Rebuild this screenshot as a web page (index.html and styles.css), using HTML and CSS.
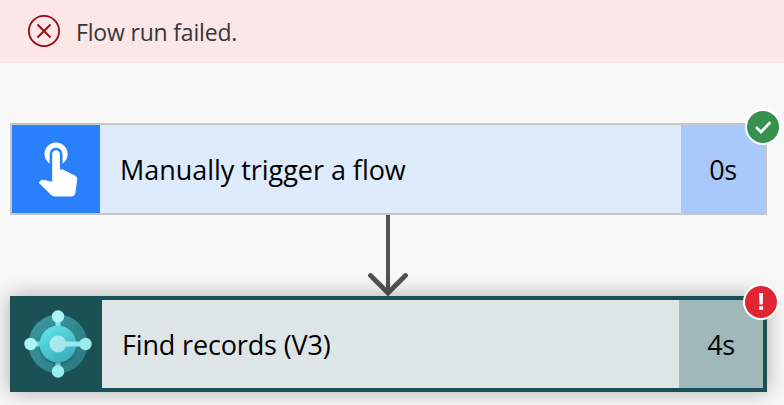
FILE: index.html
```html
<!DOCTYPE html>
<html lang="en">
<head>
<meta charset="utf-8">
<title>Flow run</title>
<link rel="stylesheet" href="styles.css">
</head>
<body>
<header class="banner">
  <svg class="banner-icon" viewBox="0 0 34 34"><circle cx="17" cy="16" r="15.1"/><path d="M10.500 9.500l13 13M23.500 9.500l-13 13"/></svg>
  <span class="banner-text">Flow run failed.</span>
</header>
<main class="flow">
  <section class="card trigger">
    <div class="card-icon">
      <svg class="touch" viewBox="4.5 2.8 15.5 21.4"><path d="M9 11.24V7.5C9 6.12 10.12 5 11.5 5S14 6.12 14 7.5v3.74c1.21-.81 2-2.18 2-3.74C16 5.01 13.99 3 11.5 3S7 5.01 7 7.5c0 1.56.79 2.93 2 3.74zm9.84 4.63l-4.54-2.26c-.17-.07-.35-.11-.54-.11H13v-6c0-.83-.67-1.5-1.5-1.5S10 6.67 10 7.5v10.74l-3.43-.72c-.08-.01-.15-.03-.24-.03-.31 0-.59.13-.79.33l-.79.8 4.94 4.94c.27.27.65.44 1.06.44h6.79c.75 0 1.33-.55 1.44-1.28l.75-5.27c.01-.07.02-.14.02-.2 0-.62-.38-1.16-.91-1.38z"/></svg>
    </div>
    <div class="card-title"><span class="trigger-title">Manually trigger a flow</span></div>
    <div class="card-time">0s</div>
    <svg class="badge" viewBox="0 0 36 36"><circle cx="18" cy="18" r="18" fill="#fff"/><circle cx="18" cy="18" r="16" fill="#35914b"/><path d="M11 18l5 5 9.300-9.800" fill="none" stroke="#fff" stroke-width="2.700"/></svg>
  </section>
  <svg class="arrow" viewBox="0 0 44 81"><path d="M22 0v77" stroke-width="4"/><path d="M4.500 60.500L22 78l17.500-17.500" stroke-width="4.800" stroke-linecap="round"/></svg>
  <section class="card action">
    <div class="card-icon">
      <svg class="hub" viewBox="0 0 68 68">
        <defs>
          <linearGradient id="ring" x1="0" y1="0" x2="1" y2="1"><stop offset="0" stop-color="#3b9aa3"/><stop offset="1" stop-color="#2a767d"/></linearGradient>
          <linearGradient id="disc" x1=".2" y1="0" x2=".8" y2="1"><stop offset="0" stop-color="#5fe3ea"/><stop offset="1" stop-color="#39abb8"/></linearGradient>
          <linearGradient id="core" x1="0" y1="0" x2="1" y2="1"><stop offset="0" stop-color="#a9f0f4"/><stop offset="1" stop-color="#a4e0e6"/></linearGradient>
          <filter id="soft" x="-30%" y="-30%" width="160%" height="160%"><feDropShadow dx="0" dy="2" stdDeviation="1.800" flood-color="#0d4147" flood-opacity=".45"/></filter>
        </defs>
        <circle cx="34" cy="34" r="29.500" fill="url(#ring)"/>
        <path d="M34 7v54M7 34h20" stroke="#8ddfe5" stroke-width="5"/>
        <circle cx="34" cy="34" r="18.300" fill="url(#disc)" filter="url(#soft)"/>
        <path d="M34 34h27" stroke="#97e9ef" stroke-width="5"/>
        <circle cx="34" cy="34" r="8.500" fill="url(#core)"/>
        <circle cx="34" cy="6.500" r="6.200" fill="#aaf4f8"/>
        <circle cx="6.500" cy="34" r="6.200" fill="#aaf4f8"/>
        <circle cx="61.500" cy="34" r="6.200" fill="#9cebef"/>
        <circle cx="34" cy="61.500" r="6.200" fill="#98edf0"/>
      </svg>
    </div>
    <div class="card-title"><span class="action-title">Find records (V3)</span></div>
    <div class="card-time">4s</div>
    <svg class="badge" viewBox="0 0 36 36"><circle cx="18" cy="18" r="18" fill="#fff"/><circle cx="18" cy="18" r="16" fill="#de2531"/><path d="M16.100 9h4l-.4 11.500h-3.200zM16.100 22.300h4v3.500h-4z" fill="#fff"/></svg>
  </section>
</main>
</body>
</html>
```
FILE: styles.css
```css
* { box-sizing: border-box; }
body {
  margin: 0;
  height: 405px;
  overflow: hidden;
  background: #f8f8f8;
  color: #000;
  font-family: "Open Sans", "Noto Sans", sans-serif;
}
svg { display: block; flex: none; }
.banner {
  display: flex;
  align-items: center;
  gap: 15px;
  height: 63px;
  padding: 0 27px;
  background: #fbe6e8;
}
.banner-icon {
  width: 34px;
  height: 34px;
  fill: none;
  stroke: #9c0711;
  stroke-width: 1.8;
}
.banner-text {
  padding-top: 1px;
  color: #383736;
  font-size: 23px;
  line-height: 30px;
  letter-spacing: -.18px;
  white-space: nowrap;
}
.flow {
  display: flex;
  flex-direction: column;
  padding: 60px 17px 0 10px;
}
.card {
  position: relative;
  display: flex;
  font-size: 27px;
  line-height: 36px;
}
.card-icon { display: flex; align-items: center; justify-content: center; width: 88px; flex: none; }
.card-title { display: flex; align-items: center; flex: 1; padding: 1px 0 0 20px; white-space: nowrap; }
.trigger-title { letter-spacing: -.04px; }
.action-title { letter-spacing: -.15px; }
.card-time { display: flex; align-items: center; justify-content: center; width: 84px; padding-top: 1px; letter-spacing: -.3px; }
.trigger { height: 92px; border: 2px solid #c8c6c4; background: #deebfd; }
.trigger .card-icon { background: #2a7ffb; }
.trigger .card-time { background: #a8c9fa; }
.touch { width: 40px; height: 55px; margin-left: 4px; fill: #fff; }
.action {
  height: 96px;
  border: 4px solid #1b5055;
  background: #dde5e6;
  box-shadow: 0 0 20px rgba(0, 0, 0, .32);
}
.action .card-icon { background: #1b5055; }
.action .card-time { background: #a1b8ba; }
.hub { width: 68px; height: 68px; }
.badge { position: absolute; width: 36px; height: 36px; top: -16px; right: -16px; }
.arrow {
  position: relative;
  z-index: 0;
  width: 44px;
  height: 81px;
  margin-left: 356px;
  fill: none;
  stroke: #545352;
}
```
